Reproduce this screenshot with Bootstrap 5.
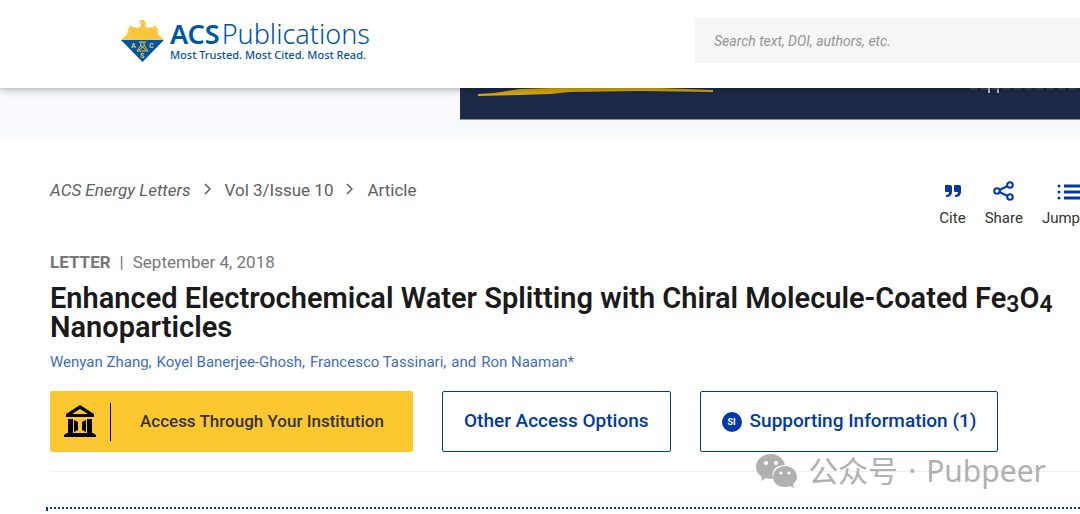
<!DOCTYPE html>
<html lang="en">
<head>
<meta charset="utf-8">
<meta name="viewport" content="width=device-width, initial-scale=1">
<title>Enhanced Electrochemical Water Splitting - ACS Energy Letters</title>
<link rel="stylesheet" href="https://cdn.jsdelivr.net/npm/bootstrap@5.3.0/dist/css/bootstrap.min.css">
<style>
  :root { --acs-blue: #0039a6; --acs-yellow: #fdc82f; }
  body { font-family: Roboto, "Liberation Sans", sans-serif; color: #1a1a1a; overflow: hidden; }
  a { text-decoration: none; }
  .site-header { padding: 18px 0 25px 121px; box-shadow: 0 1px 8px rgba(0,0,0,.35); z-index: 2; }
  .brand { color: #0054a6; font-family: "Noto Sans", sans-serif; gap: 6px; }
  .brand-name { font-size: 27px; line-height: 28px; font-weight: 300; gap: 2px; }
  .brand-name b { font-weight: 600; }
  .brand-tag { font-size: 11px; line-height: 14px; font-weight: 500; }
  .search-box { width: 385px; height: 45px; background: #f6f6f6; border: 0; border-radius: 0; padding: 0 19px; font-size: 14px; font-style: italic; }
  .search-box::placeholder { color: #929497; opacity: 1; }
  .ad-strip { height: 49px; background: #f7f9ff; padding-left: 460px; }
  .ad-banner { height: 32px; background: #1d2a47; border-bottom: 1px solid #8c93a5; }
  .article-head { padding-left: 50px; }
  .crumbs { padding-top: 42px; gap: 13px; font-size: 17px; line-height: 22px; }
  .crumbs a { color: #606060; }
  .tools { padding-top: 43px; gap: 19px; font-size: 15px; line-height: 20px; }
  .tools button { border: 0; background: none; padding: 0; color: #333; gap: 6px; }
  .kicker { font-size: 17px; line-height: 20px; margin-top: 24px; color: #777; gap: 9px; }
  .paper-title { font-size: 29px; line-height: 29px; font-weight: 600; margin: 12px 0 0; }
  .paper-title sub { font-size: 23px; bottom: -4px; line-height: 0; }
  .authors { font-size: 15px; line-height: 20px; margin-top: 10px; gap: 5px; }
  .authors a { color: #3f6cc4; }
  .actions { margin-top: 19px; gap: 29px; }
  .actions .btn { height: 61px; border-radius: 2px; font-weight: 500; font-size: 19px; padding: 0 21px; white-space: nowrap; }
  .actions .btn-institution { background: var(--acs-yellow); color: #333; font-size: 17px; width: 363px; padding: 0 28px 0 13px; border: 0; }
  .btn-line { border: 1px solid var(--acs-blue); color: var(--acs-blue); background: #fff; }
  .split { width: 1px; height: 38px; background: #000; margin: 0 29px 0 13px; }
  .si-dot { width: 20px; height: 20px; background: var(--acs-blue); color: #fff; font-size: 9px; line-height: 20px; font-weight: 700; }
  .rule { height: 1px; background: #eee; margin-top: 19px; }
  .focus-panel { border: 2px dotted var(--acs-blue); border-width: 2px 0 0 2px; height: 4px; margin: 35px 0 0 46px; }
  .watermark { right: 34px; bottom: -19px; color: #b0b0b0; font-family: "Noto Sans", "Noto Sans CJK SC", sans-serif; font-size: 30px; line-height: 40px; gap: 10px; }
</style>
</head>
<body>
<header class="site-header bg-white position-relative d-flex align-items-center justify-content-between">
  <a href="#" class="brand d-flex align-items-center">
    <svg width="43" height="44" viewBox="0 -1 43 44" aria-hidden="true">
      <path fill="#fbc640" d="M0 20 7 13 5 12 8 11 6 9 9 8 8 5 12 7 18 8 20 5 19 2 18 2 20 0 23 0 25 3 24 6 26 8 32 7 36 5 35 8 38 9 36 11 39 12 36 13 43 20Z"/>
      <path d="m10 10 7 4M9 13l6 3M33 10l-7 4M34 13l-6 3M19 10v6M24 10v6" fill="none" stroke="#e9b038" stroke-width=".5"/>
      <path fill="#0054a6" d="M0 20H43L21.500 42Z"/>
      <path d="M18 22h7M20 22v3l-4 6h11l-4-6v-3M18 30l6-5M25 30l-6-5" fill="none" stroke="#fdc82f"/>
      <g fill="#fdc82f" font-family="Roboto" font-size="7" font-weight="700"><text x="10" y="28">A</text><text x="28" y="28">C</text><text x="19" y="38">S</text></g>
    </svg>
    <span class="d-flex flex-column"><span class="brand-name d-flex"><b>ACS</b><span>Publications</span></span><span class="brand-tag">Most Trusted. Most Cited. Most Read.</span></span>
  </a>
  <input class="search-box" type="search" aria-label="Search" placeholder="Search text, DOI, authors, etc.">
</header>

<div class="ad-strip">
  <div class="ad-banner">
    <svg class="d-block" width="100%" height="10" aria-hidden="true"><path fill="#d9ab0c" d="M18 6 34 5 60 1 90 0H200L253 2V4L180 3 110 4 90 6 60 7 18 8Z"/><path d="M529 0v5M538 0v5" stroke="#b9bdc8" stroke-width="2"/><path d="M510 1H620" stroke="#596176" stroke-dasharray="7 4"/></svg>
  </div>
</div>

<main>
  <div class="article-head">
    <div class="d-flex justify-content-between">
      <nav class="crumbs d-flex" aria-label="Breadcrumb">
        <a href="#"><i>ACS Energy Letters</i></a>
        <svg width="8" height="22" viewBox="0 0 8 22" aria-hidden="true"><path d="m1 5 5 5-5 5" fill="none" stroke="#606060" stroke-width="1.500"/></svg>
        <a href="#">Vol 3/Issue 10</a>
        <svg width="8" height="22" viewBox="0 0 8 22" aria-hidden="true"><path d="m1 5 5 5-5 5" fill="none" stroke="#606060" stroke-width="1.500"/></svg>
        <a href="#">Article</a>
      </nav>
      <div class="tools d-flex">
        <button type="button" class="d-flex flex-column align-items-center">
          <svg width="18" height="22" viewBox="0 0 18 22" aria-hidden="true"><path fill="#0039a6" d="M2 5h4q2 0 2 2v5q0 5-6 5v-2q3 0 3-3H2q-1 0-1-1V6q0-1 1-1ZM11 5h4q2 0 2 2v5q0 5-6 5v-2q3 0 3-3h-3q-1 0-1-1V6q0-1 1-1Z"/></svg>Cite</button>
        <button type="button" class="d-flex flex-column align-items-center">
          <svg width="22" height="22" viewBox="0 0 22 22" fill="none" stroke="#0039a6" stroke-width="2" aria-hidden="true"><circle cx="4" cy="11" r="2.800"/><circle cx="17" cy="5" r="2.800"/><circle cx="17" cy="17" r="2.800"/><path d="m6.500 10 8-4M6.500 12l8 4"/></svg>Share</button>
        <button type="button" class="d-flex flex-column align-items-end">
          <svg width="23" height="22" viewBox="0 0 23 22" fill="#0039a6" aria-hidden="true"><circle cx="2" cy="6" r="1.500"/><circle cx="2" cy="12" r="1.500"/><circle cx="2" cy="18" r="1.500"/><path d="M7 4.500h16v3H7zM7 10.500h16v3H7zM7 16.500h16v3H7z"/></svg>Jump</button>
      </div>
    </div>
    <div class="kicker d-flex"><b>LETTER</b><span>|</span><span>September 4, 2018</span></div>
    <h1 class="paper-title">Enhanced Electrochemical Water Splitting with Chiral Molecule-Coated Fe<sub>3</sub>O<sub>4</sub> Nanoparticles</h1>
    <div class="authors d-flex">
      <a href="#">Wenyan Zhang,</a><a href="#">Koyel Banerjee-Ghosh,</a><a href="#">Francesco Tassinari,</a><a href="#">and</a><a href="#">Ron Naaman*</a>
    </div>
    <div class="position-relative">
      <div class="actions d-flex">
        <button type="button" class="btn btn-institution d-flex align-items-center">
          <svg width="34" height="34" viewBox="0 0 34 34" aria-hidden="true"><path d="M17 0 31 9v3H3V9ZM17 4l-8 5h16Z" fill-rule="evenodd"/><path d="M5 14h5v14H5zM24 14h5v14h-5zM11 15l4 2v8l-4 2zM23 15l-4 2v8l4 2zM4 28h26l3 2v2H1v-2z"/></svg>
          <span class="split"></span><span>Access Through Your Institution</span>
        </button>
        <button type="button" class="btn btn-line">Other Access Options</button>
        <button type="button" class="btn btn-line d-flex align-items-center gap-2"><span class="si-dot rounded-circle">SI</span>Supporting Information (1)</button>
      </div>
      <div class="rule"></div>
      <div class="watermark position-absolute d-flex align-items-center">
        <svg width="42" height="34" viewBox="0 0 42 34" fill="#b0b0b0" aria-hidden="true"><path d="M15 0C7 0 0 5 0 13q0 6 6 10l-1 4 5-3q3 1 7 1-3-13 12-14C28 5 22 0 15 0Z"/><path d="M29 12c-7 0-12 5-12 11s5 10 12 10q3 0 5-1l4 2-1-4q4-3 4-7c0-6-5-11-12-11Z"/><g fill="#fff"><circle cx="10" cy="9" r="2"/><circle cx="20" cy="9" r="2"/><circle cx="25" cy="19" r="1.500"/><circle cx="33" cy="19" r="1.500"/></g></svg>
        <span>公众号</span><span>·</span><span>Pubpeer</span>
      </div>
    </div>
  </div>
  <div class="focus-panel"></div>
</main>
<script src="https://cdn.jsdelivr.net/npm/bootstrap@5.3.0/dist/js/bootstrap.bundle.min.js"></script>
</body>
</html>
